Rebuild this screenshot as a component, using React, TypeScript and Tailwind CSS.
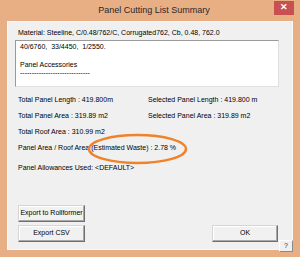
import React from "react";

const font = { fontFamily: '"Liberation Sans", Arial, sans-serif' };

const Button = ({ label, className }: { label: string; className: string }) => (
  <button
    type="button"
    className={`flex h-[17px] items-center justify-center border border-t-[#d6d6d6] border-l-[#d6d6d6] border-r-[#6f6f6f] border-b-[#6f6f6f] bg-[#f1f1f1] text-[7px] text-black shadow-[inset_-1px_-1px_0_#a8a8a8,inset_1px_1px_0_#ffffff] ${className}`}
  >
    {label}
  </button>
);

export default function App() {
  return (
    <div
      className="relative flex h-[257px] w-[300px] flex-col bg-[#e8ae84]"
      style={font}
    >
      {/* title bar */}
      <div className="relative flex h-[21px] items-center justify-center pl-[8px] text-[9px] text-[#2a2a2a]">
        Panel Cutting List Summary
        <div className="absolute right-[6px] top-[1px] flex h-[14px] w-[20px] items-center justify-center bg-[#c75050] text-[9px] font-bold text-white">
          ✕
        </div>
      </div>

      {/* client */}
      <div className="relative mx-[7px] mb-[7px] flex flex-1 flex-col border border-[#f7f7f7] bg-[#f0f0f0] text-[7px] text-black">
        <div className="ml-[10px] mt-[6px] h-[9px] leading-[9px]">
          Material: Steeline, C/0.48/762/C, Corrugated762, Cb, 0.48, 762.0
        </div>

        <div className="ml-[7px] mr-[13px] mt-[3px] h-[47px] border border-[#9a9a9a] border-r-[#e0e0e0] border-b-[#e0e0e0] bg-white px-[4px] pt-[1px] leading-[9px]">
          <div>40/6760,&nbsp; 33/4450,&nbsp; 1/2550.</div>
          <div>&nbsp;</div>
          <div>Panel Accessories</div>
          <div className="leading-[7px]">------------------------------</div>
        </div>

        <div className="ml-[10px] mt-[5px] flex flex-col">
          <div className="flex h-[16px] items-center">
            <span className="w-[130px]">Total Panel Length : 419.800m</span>
            <span>Selected Panel Length : 419.800 m</span>
          </div>
          <div className="flex h-[16px] items-center">
            <span className="w-[130px]">Total Panel Area : 319.89 m2</span>
            <span>Selected Panel Area : 319.89 m2</span>
          </div>
          <div className="flex h-[16px] items-center">
            <span>Total Roof Area : 310.99 m2</span>
          </div>
          <div className="flex h-[16px] items-center">
            <span>Panel Area / Roof Area (Estimated Waste) : 2.78 %</span>
          </div>
          <div className="flex h-[17px] items-end">
            <span>Panel Allowances Used: &lt;DEFAULT&gt;</span>
          </div>
        </div>

        <div className="mt-auto mb-[7px] ml-[10px] mr-[14px] flex items-end justify-between">
          <div className="flex flex-col gap-[3px]">
            <Button label="Export to Rollformer" className="w-[67px]" />
            <Button label="Export CSV" className="w-[67px]" />
          </div>
          <Button label="OK" className="w-[66px]" />
        </div>
      </div>

      {/* help button over the corner */}
      <div className="absolute left-[279px] top-[240px] flex h-[12px] w-[14px] items-center justify-center border border-t-[#ffffff] border-l-[#ffffff] border-r-[#8a8a8a] border-b-[#8a8a8a] bg-[#f0f0f0] text-[7px] text-[#333]">
        ?
      </div>

      {/* highlight ellipse */}
      <svg
        className="absolute left-[87px] top-[133px]"
        width="101"
        height="32"
        viewBox="0 0 101 32"
      >
        <ellipse
          cx="50.5"
          cy="16"
          rx="48.5"
          ry="14"
          fill="none"
          stroke="#f0822a"
          strokeWidth="2.5"
        />
      </svg>
    </div>
  );
}
